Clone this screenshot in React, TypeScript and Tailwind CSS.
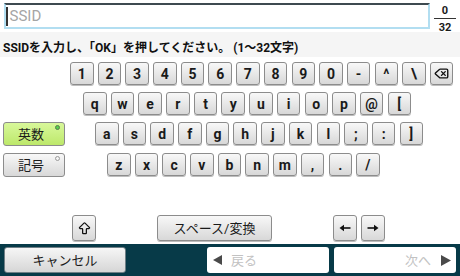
import { ArrowBigUp, Delete } from "lucide-react";

const row1 = ["1", "2", "3", "4", "5", "6", "7", "8", "9", "0", "-", "^", "\\"];
const row2 = ["q", "w", "e", "r", "t", "y", "u", "i", "o", "p", "@", "["];
const row3 = ["a", "s", "d", "f", "g", "h", "j", "k", "l", ";", ":", "]"];
const row4 = ["z", "x", "c", "v", "b", "n", "m", ",", ".", "/"];

const keyBase =
  "flex items-center justify-center rounded-[3px] border border-[#8c8c8c] bg-linear-to-b from-[#f8f8f8] to-[#d8d8d8] text-[#1a1a1a] leading-none shadow-[0_1px_0_#bdbdbd]";

function Key({ label }: { label: string }) {
  return <div className={`${keyBase} w-[23.5px] h-[23px] text-[14px] font-bold`}>{label}</div>;
}

function ModeButton({ label, active }: { label: string; active?: boolean }) {
  return (
    <div
      className={`relative w-[62px] h-[24px] flex items-center justify-center rounded-[3px] border border-[#8c8c8c] text-[13px] text-[#1a1a1a] leading-none ${
        active ? "bg-linear-to-b from-[#d8f89a] to-[#bde86a]" : "bg-linear-to-b from-[#f8f8f8] to-[#d8d8d8]"
      }`}
    >
      <span className="-ml-[6px]">{label}</span>
      <span
        className={`absolute top-[2px] right-[4px] w-[5px] h-[5px] rounded-full border ${
          active ? "bg-[#55d04a] border-[#5a7a50]" : "bg-[#f4f4f4] border-[#9a9a9a]"
        }`}
      />
    </div>
  );
}

function Arrow({ dir }: { dir: "left" | "right" }) {
  return (
    <svg width="12" height="8" viewBox="0 0 12 8">
      <g transform={dir === "right" ? "translate(12,0) scale(-1,1)" : undefined}>
        <path d="M0.5 4 L5 0.8 L5 7.2 Z" fill="#111" />
        <rect x="4" y="3.2" width="7.5" height="1.6" fill="#111" />
      </g>
    </svg>
  );
}

export default function App() {
  return (
    <div className="w-[460px] h-[276px] bg-white flex flex-col overflow-hidden font-[Roboto,'Noto_Sans_CJK_JP',sans-serif]">
      {/* input row */}
      <div className="h-[32px] flex items-start pt-[3px] pl-[4px]">
        <div className="w-[426px] h-[26px] border-2 border-[#b2def1] border-t-[#3e4a50] bg-white flex items-center pl-[0px]">
          <span className="w-[1.5px] h-[19px] bg-[#333]" />
          <span className="ml-[2px] text-[15px] text-[#a5a5a5] leading-none">SSID</span>
        </div>
        <div className="ml-[4px] w-[22px] flex flex-col items-center text-[11px] font-bold text-[#1a1a1a] leading-none pt-[2px]">
          <span className="h-[10px]">0</span>
          <span className="w-[22px] h-[1px] bg-[#333] mt-[3px] mb-[3px]" />
          <span className="h-[10px]">32</span>
        </div>
      </div>

      {/* instruction */}
      <div className="h-[25px] bg-[#f5f5f5] pl-[3px] pt-[10px] text-[12px] font-bold text-[#111] leading-none whitespace-nowrap">
        SSIDを入力し、「OK」を押してください。 (1〜32文字)
      </div>

      {/* keyboard */}
      <div className="flex flex-col gap-[7px] pt-[5px]">
        <div className="flex gap-[4.2px] pl-[70px]">
          {row1.map((k) => (
            <Key key={k} label={k} />
          ))}
          <div className={`${keyBase} w-[23.5px] h-[23px] from-[#d6d6d6] to-[#c2c2c2]`}>
            <Delete size={15} strokeWidth={2.2} color="#111" />
          </div>
        </div>
        <div className="flex gap-[4.2px] pl-[83px]">
          {row2.map((k) => (
            <Key key={k} label={k} />
          ))}
        </div>
        <div className="flex items-start pl-[3px]">
          <ModeButton label="英数" active />
          <div className="flex gap-[4.2px] ml-[30px]">
            {row3.map((k) => (
              <Key key={k} label={k} />
            ))}
          </div>
        </div>
        <div className="flex items-start pl-[3px]">
          <ModeButton label="記号" />
          <div className="flex gap-[4.2px] ml-[42px]">
            {row4.map((k) => (
              <Key key={k} label={k} />
            ))}
          </div>
        </div>
      </div>

      {/* bottom keys */}
      <div className="flex mt-[38px] pl-[72px]">
        <div className={`${keyBase} w-[24px] h-[26px]`}>
          <ArrowBigUp size={15} strokeWidth={2} color="#111" />
        </div>
        <div className={`${keyBase} ml-[61px] w-[115px] h-[26px] text-[13px]`}>スペース/変換</div>
        <div className={`${keyBase} ml-[61px] w-[24px] h-[26px]`}>
          <Arrow dir="left" />
        </div>
        <div className={`${keyBase} ml-[4px] w-[24px] h-[26px]`}>
          <Arrow dir="right" />
        </div>
      </div>

      {/* bottom bar */}
      <div className="mt-[3px] flex-1 bg-[#073a48] flex items-start pt-[3px] pl-[4px]">
        <div className="w-[122px] h-[26px] flex items-center justify-center rounded-[3px] border border-[#6f7f86] bg-linear-to-b from-[#f6f6f6] to-[#d6d6d6] text-[13px] text-[#1a1a1a] leading-none">
          キャンセル
        </div>
        <div className="ml-[81px] w-[122px] h-[26px] flex items-center rounded-[3px] bg-white pl-[6px] text-[13px] text-[#c2c2c2] leading-none">
          <svg width="9" height="10" viewBox="0 0 9 10">
            <path d="M0 5 L9 0 L9 10 Z" fill="#4a4a4a" />
          </svg>
          <span className="ml-[9px]">戻る</span>
        </div>
        <div className="ml-[5px] w-[122px] h-[26px] flex items-center justify-end rounded-[3px] bg-white pr-[5px] text-[13px] text-[#c2c2c2] leading-none">
          <span className="mr-[10px]">次へ</span>
          <svg width="10" height="11" viewBox="0 0 10 11">
            <path d="M10 5.5 L0 0 L0 11 Z" fill="#4a4a4a" />
          </svg>
        </div>
      </div>
    </div>
  );
}
